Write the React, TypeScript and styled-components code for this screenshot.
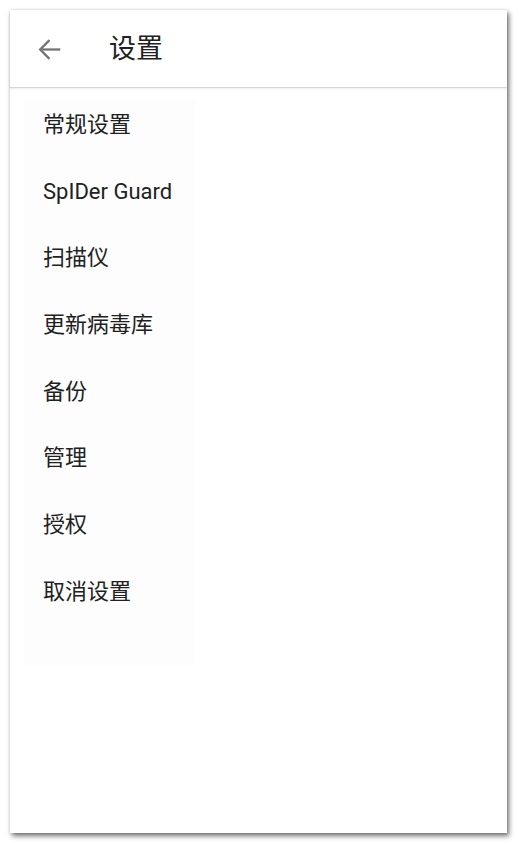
import React from "react";
import styled, { createGlobalStyle } from "styled-components";

const Global = createGlobalStyle`
  html, body { margin: 0; padding: 0; background: #ffffff; }
  body { font-family: Roboto, "Noto Sans CJK SC", "Noto Sans", sans-serif; }
`;

const Page = styled.div`
  width: 519px;
  height: 844px;
  box-sizing: border-box;
  padding: 10px 0 0 10px;
`;

const Frame = styled.div`
  width: 497px;
  height: 823px;
  background: #ffffff;
  box-shadow: 2px 3px 5px rgba(0, 0, 0, 0.55), 0 0 3px rgba(0, 0, 0, 0.12);
  display: flex;
  flex-direction: column;
`;

const Header = styled.header`
  height: 78px;
  flex: none;
  display: flex;
  align-items: center;
  padding: 2px 0 0 27px;
  box-sizing: border-box;
  border-bottom: 1px solid #d6d6d6;
  box-shadow: 0 1px 2px rgba(0, 0, 0, 0.08);
`;

const BackButton = styled.button`
  border: 0;
  background: none;
  padding: 0;
  width: 24px;
  height: 24px;
  display: flex;
  align-items: center;
  justify-content: center;
  color: #757575;
`;

const Title = styled.h1`
  margin: 0 0 0 48px;
  font-size: 27px;
  font-weight: 400;
  color: #212121;
  line-height: 1;
`;

const Body = styled.main`
  flex: 1;
  padding: 11px 0 0 14px;
`;

const Menu = styled.ul`
  list-style: none;
  margin: 0;
  width: 171px;
  box-sizing: border-box;
  padding: 11px 0 59px 19px;
  background: #fdfdfd;
  display: flex;
  flex-direction: column;
  gap: 36.67px;
`;

const Item = styled.li`
  height: 30px;
  line-height: 30px;
  font-size: 22px;
  color: #212121;
  white-space: nowrap;
`;

const items = ["常规设置", "SpIDer Guard", "扫描仪", "更新病毒库", "备份", "管理", "授权", "取消设置"];

export default function App() {
  return (
    <Page>
      <Global />
      <Frame>
        <Header>
          <BackButton aria-label="返回">
            <svg width="23" height="23" viewBox="4 4 16 16" fill="none" stroke="currentColor" strokeWidth="1.6" strokeLinecap="butt" strokeLinejoin="miter">
              <path d="M19.5 12H5.5" />
              <path d="M12 18.5L5.5 12L12 5.5" />
            </svg>
          </BackButton>
          <Title>设置</Title>
        </Header>
        <Body>
          <Menu>
            {items.map((t) => (
              <Item key={t}>{t}</Item>
            ))}
          </Menu>
        </Body>
      </Frame>
    </Page>
  );
}
